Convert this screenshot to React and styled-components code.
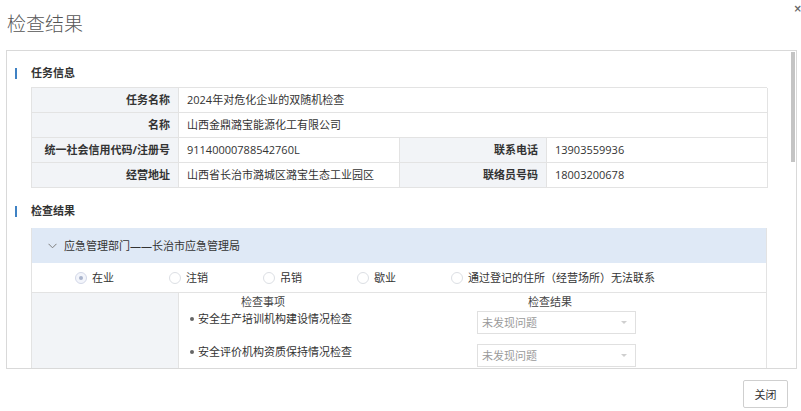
import React from 'react';
import styled, { createGlobalStyle } from 'styled-components';

const Global = createGlobalStyle`
  html, body { margin: 0; padding: 0; background: #fff; }
  body {
    font-family: "Open Sans", "Noto Sans CJK SC", sans-serif;
    font-size: 11px;
    color: #333;
  }
  * { box-sizing: border-box; }
`;

const Dialog = styled.div`
  width: 801px;
  height: 411px;
  display: flex;
  flex-direction: column;
  position: relative;
  overflow: hidden;
`;

const TitleBar = styled.div`
  height: 50px;
  flex: none;
  padding-left: 7px;
  font-family: "Noto Sans CJK SC", sans-serif;
  font-size: 19px;
  line-height: 46px;
  color: #555;
  font-weight: 300;
`;

const CloseX = styled.span`
  position: absolute;
  top: 2px;
  right: -1px;
  font-family: "DejaVu Sans", sans-serif;
  font-size: 10px;
  font-weight: bold;
  color: #666;
  line-height: 14px;
`;

const BodyFrame = styled.div`
  flex: none;
  position: relative;
  height: 319px;
  margin: 0 4px 0 6px;
  border: 1px solid #d9d9d9;
`;

const Scroller = styled.div`
  height: 100%;
  overflow-y: auto;
  overflow-x: hidden;
  scrollbar-width: none;
  &::-webkit-scrollbar { display: none; }
`;

const ScrollThumb = styled.div`
  position: absolute;
  top: 1px;
  right: 1px;
  width: 4px;
  height: 110px;
  background: #c4c4c4;
`;

const Content = styled.div`
  padding: 12px 29px 40px 8px;
`;

const SectionTitle = styled.div`
  display: flex;
  align-items: center;
  height: 20px;
  line-height: 20px;
  font-weight: bold;
  color: #333;
  margin-top: ${p => p.$top || 0}px;
  &::before {
    content: "";
    width: 2px;
    height: 11px;
    background: #3f82c4;
    margin-right: 14px;
  }
`;

const InfoGrid = styled.div`
  margin: 4px 0 0 16px;
  display: grid;
  grid-template-columns: 147px 221px 147px 221px;
  border-top: 1px solid #e3e3e3;
  border-left: 1px solid #e3e3e3;
`;

const Cell = styled.div`
  grid-column: span ${p => p.$span || 1};
  height: 25px;
  border-right: 1px solid #e3e3e3;
  border-bottom: 1px solid #e3e3e3;
  display: flex;
  align-items: center;
  line-height: 16px;
  white-space: nowrap;
  ${p => p.$label ? `
    justify-content: flex-end;
    padding-right: 8px;
    background: #f2f4f7;
    font-weight: bold;
  ` : `
    padding-left: 8px;
    background: #fff;
  `}
`;

const Accordion = styled.div`
  margin: ${p => p.$top || 0}px 0 0 16px;
  border-left: 1px solid #e3e3e3;
  border-right: 1px solid #e3e3e3;
  border-bottom: 1px solid #e3e3e3;
`;

const AccHeader = styled.div`
  height: 35px;
  background: #dfe9f6;
  display: flex;
  align-items: center;
  padding-left: 16px;
  gap: 7px;
  line-height: 16px;
  color: #333;
`;

const RadioRow = styled.div`
  height: 30px;
  border-bottom: 1px solid #e3e3e3;
  display: flex;
  align-items: center;
  padding-left: 43px;
  gap: 55px;
`;

const RadioItem = styled.label`
  display: flex;
  align-items: center;
  gap: 5px;
  line-height: 16px;
  color: #333;
  white-space: nowrap;
`;

const RadioCircle = styled.span`
  width: 12px;
  height: 12px;
  border-radius: 50%;
  border: 1px solid ${p => p.$checked ? '#d3d8e8' : '#dcdfe4'};
  background: ${p => p.$checked ? '#f3f5fb' : '#fff'};
  display: flex;
  align-items: center;
  justify-content: center;
  &::after {
    content: "";
    width: 4px;
    height: 4px;
    border-radius: 50%;
    background: ${p => p.$checked ? '#aab4cc' : 'transparent'};
  }
`;

const ItemsArea = styled.div`
  display: grid;
  grid-template-columns: 147px 1fr;
`;

const SideCell = styled.div`
  background: #f2f4f7;
  border-right: 1px solid #e3e3e3;
`;

const ItemsList = styled.div`
  display: flex;
  flex-direction: column;
`;

const ItemRow = styled.div`
  display: grid;
  grid-template-columns: 297px 1fr;
  height: ${p => p.$head ? 18 : 33}px;
  line-height: ${p => p.$head ? 18 : 16}px;
`;

const HeadText = styled.div`
  padding-left: ${p => p.$pad}px;
  color: #444;
`;

const ItemName = styled.div`
  display: flex;
  align-items: center;
  height: 16px;
  padding-left: 11px;
  gap: 4px;
  color: #333;
  white-space: nowrap;
  &::before {
    content: "";
    width: 4px;
    height: 4px;
    border-radius: 50%;
    background: #666;
  }
`;

const SelectBox = styled.div`
  width: 159px;
  height: 23px;
  margin-left: 1px;
  border: 1px solid #e0e0e0;
  background: #fff;
  display: flex;
  align-items: center;
  justify-content: space-between;
  padding: 0 8px 0 4px;
  color: #9a9a9a;
  &::after {
    content: "";
    border-left: 3px solid transparent;
    border-right: 3px solid transparent;
    border-top: 3px solid #cfcfcf;
  }
`;

const Footer = styled.div`
  flex: 1;
  display: flex;
  justify-content: flex-end;
  align-items: flex-start;
  padding: 11px 13px 0 0;
`;

const Button = styled.button`
  width: 45px;
  height: 28px;
  border: 1px solid #cfcfcf;
  border-radius: 2px;
  background: #fff;
  font-family: "Noto Sans CJK SC", sans-serif;
  font-size: 11px;
  color: #333;
  padding: 0;
`;

const Chevron = () => (
  <svg width="9" height="6" viewBox="0 0 9 6">
    <polyline points="0.5,0.8 4.5,4.8 8.5,0.8" fill="none" stroke="#7d7d7d" strokeWidth="1" />
  </svg>
);

const radios = ['在业', '注销', '吊销', '歇业', '通过登记的住所（经营场所）无法联系'];

const Panel = ({ title, items, top }) => (
  <Accordion $top={top}>
    <AccHeader>
      <Chevron />
      <span>{title}</span>
    </AccHeader>
    <RadioRow>
      {radios.map((r, i) => (
        <RadioItem key={r}>
          <RadioCircle $checked={i === 0} />
          {r}
        </RadioItem>
      ))}
    </RadioRow>
    <ItemsArea>
      <SideCell />
      <ItemsList>
        <ItemRow $head>
          <HeadText $pad={62}>检查事项</HeadText>
          <HeadText $pad={52}>检查结果</HeadText>
        </ItemRow>
        {items.map(it => (
          <ItemRow key={it}>
            <ItemName>{it}</ItemName>
            <div><SelectBox>未发现问题</SelectBox></div>
          </ItemRow>
        ))}
      </ItemsList>
    </ItemsArea>
  </Accordion>
);

const items1 = [
  '安全生产培训机构建设情况检查',
  '安全评价机构资质保持情况检查',
  '安全生产许可证有效情况检查',
  '重大危险源管理情况检查',
  '特种作业人员持证上岗情况检查',
  '应急预案编制及备案情况检查',
  '隐患排查治理情况检查',
];

const items2 = [
  '营业执照登记事项检查',
  '年度报告公示信息检查',
  '工业产品生产许可证检查',
  '产品质量抽样检查',
  '特种设备使用登记检查',
  '计量器具检定情况检查',
];

export default function App() {
  return (
    <>
      <Global />
      <Dialog>
        <TitleBar>检查结果</TitleBar>
        <CloseX>×</CloseX>
        <BodyFrame>
          <Scroller>
            <Content>
              <SectionTitle>任务信息</SectionTitle>
              <InfoGrid>
                <Cell $label>任务名称</Cell>
                <Cell $span={3}>2024年对危化企业的双随机检查</Cell>
                <Cell $label>名称</Cell>
                <Cell $span={3}>山西金鼎潞宝能源化工有限公司</Cell>
                <Cell $label>统一社会信用代码/注册号</Cell>
                <Cell>91140000788542760L</Cell>
                <Cell $label>联系电话</Cell>
                <Cell>13903559936</Cell>
                <Cell $label>经营地址</Cell>
                <Cell>山西省长治市潞城区潞宝生态工业园区</Cell>
                <Cell $label>联络员号码</Cell>
                <Cell>18003200678</Cell>
              </InfoGrid>
              <SectionTitle $top={13}>检查结果</SectionTitle>
              <Panel title="应急管理部门——长治市应急管理局" items={items1} top={7} />
              <Panel title="市场监管部门——长治市市场监督管理局" items={items2} top={10} />
            </Content>
          </Scroller>
          <ScrollThumb />
        </BodyFrame>
        <Footer>
          <Button>关闭</Button>
        </Footer>
      </Dialog>
    </>
  );
}
